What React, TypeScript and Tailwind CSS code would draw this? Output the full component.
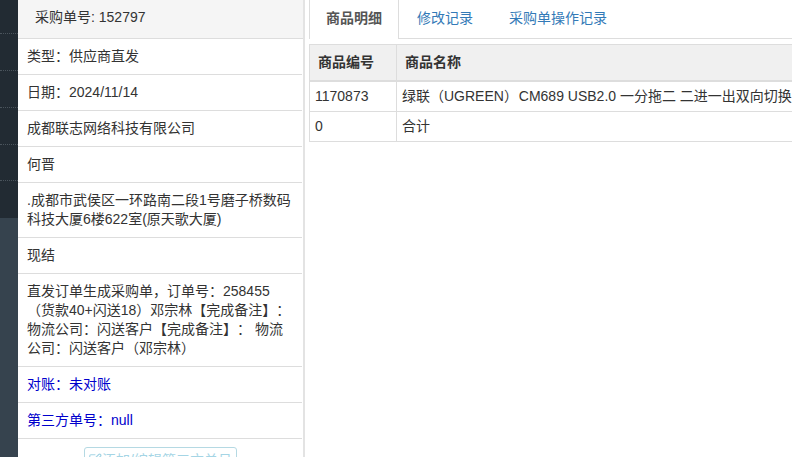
import React from "react";
import { SquarePen } from "lucide-react";

const font = "font-['Liberation_Sans','Noto_Sans_CJK_SC',sans-serif]";

const Row: React.FC<{ children: React.ReactNode; blue?: boolean }> = ({ children, blue }) => (
  <div className={`mr-[1px] border-b border-[#dddddd] px-[9px] py-[8px] leading-[19px] ${blue ? "text-[#0000cc]" : ""}`}>
    {children}
  </div>
);

export default function App() {
  return (
    <div className={`${font} flex h-[457px] w-[792px] overflow-hidden bg-white text-[14px] text-[#333333] [text-spacing-trim:space-all]`}>
      <div className="flex w-[18px] shrink-0 flex-col bg-[#36434e]">
        <div className="h-[218px] bg-[#222b33]">
          {[34, 37, 37, 37, 36].map((h, i) => (
            <div key={i} className="border-b border-dotted border-[#4a545c]" style={{ height: h }} />
          ))}
        </div>
      </div>

      <div className="w-[287px] shrink-0 border-r-2 border-[#e3e3e3]">
        <div className="h-[39px] border-b border-[#dddddd] bg-[#f5f5f5] pl-[17px] pt-[8px] leading-[19px]">采购单号: 152797</div>
        <Row>类型：供应商直发</Row>
        <Row>日期：2024/11/14</Row>
        <Row>成都联志网络科技有限公司</Row>
        <Row>何晋</Row>
        <Row>.成都市武侯区一环路南二段1号磨子桥数码科技大厦6楼622室(原天歌大厦)</Row>
        <Row>现结</Row>
        <Row>直发订单生成采购单，订单号：258455（货款40+闪送18）邓宗林【完成备注】：物流公司：闪送客户【完成备注】： 物流公司：闪送客户（邓宗林）</Row>
        <Row blue>对账：未对账</Row>
        <Row blue>第三方单号：null</Row>
        <div className="flex justify-center pr-[1px] pt-[8px]">
          <button className="flex h-[30px] w-[153px] shrink-0 items-start justify-center whitespace-nowrap rounded-[3px] border border-[#b5d9e3] pt-[3px] leading-[19px] text-[#a5d5e5]">
            <SquarePen size={14} className="mt-[2px]" />
            添加/编辑第三方单号
          </button>
        </div>
      </div>

      <div className="min-w-0 flex-1 pl-[4px]">
        <div className="flex h-[39px] border-b border-[#dddddd]">
          <div className="h-[39px] border-x border-[#dddddd] bg-white px-[16px] pt-[8px] font-bold leading-[20px] text-[#555555]">商品明细</div>
          <div className="px-[18px] pt-[8px] leading-[20px] text-[#337ab7]">修改记录</div>
          <div className="px-[18px] pt-[8px] leading-[20px] text-[#337ab7]">采购单操作记录</div>
        </div>
        <div className="mt-[5px] w-[600px] border border-[#dddddd]">
          <div className="flex h-[37px] border-b-2 border-[#dddddd] bg-[#f0f0f0] font-bold leading-[35px]">
            <div className="w-[87px] shrink-0 border-r border-[#dddddd] pl-[8px]">商品编号</div>
            <div className="pl-[8px]">商品名称</div>
          </div>
          <div className="flex h-[30px] border-b border-[#dddddd] leading-[29px]">
            <div className="w-[87px] shrink-0 border-r border-[#dddddd] pl-[5px]">1170873</div>
            <div className="whitespace-nowrap pl-[5px]">绿联（UGREEN）<span className="ml-[-3px]"> CM689 USB2.0 一分拖二 二进一出双向切换</span></div>
          </div>
          <div className="flex h-[29px] leading-[29px]">
            <div className="w-[87px] shrink-0 border-r border-[#dddddd] pl-[5px]">0</div>
            <div className="pl-[5px]">合计</div>
          </div>
        </div>
      </div>
    </div>
  );
}
